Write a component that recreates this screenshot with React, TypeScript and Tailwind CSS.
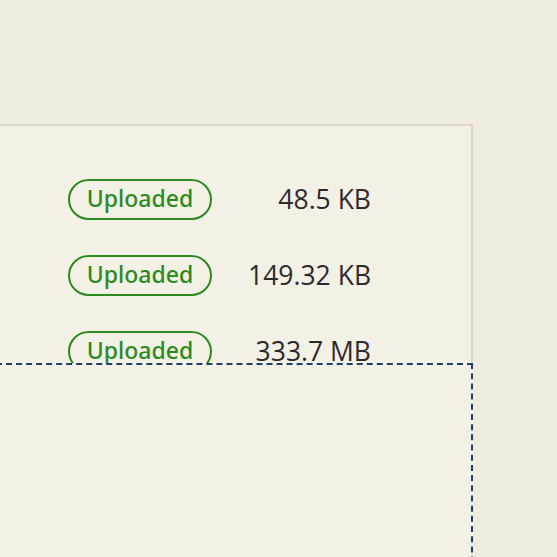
const files = [
  { status: "Uploaded", size: "48.5 KB" },
  { status: "Uploaded", size: "149.32 KB" },
  { status: "Uploaded", size: "333.7 MB" },
  { status: "Uploaded", size: "1.2 MB" },
];

export default function App() {
  return (
    <div className="relative h-[557px] w-[557px] overflow-hidden bg-[#efecdf] font-['Open_Sans',sans-serif]">
      <div className="pt-[124px]">
        {/* file list panel */}
        <div className="h-[460px] w-[473px] border-t-2 border-r-2 border-[#dcd7c8] bg-[#f3f0e5] pt-[35px]">
          {files.map((f, i) => (
            <div key={i} className="flex h-[76px] items-center">
              <div className="ml-[68px] flex h-[41px] w-[144px] items-center justify-center rounded-full border-2 border-[#2b8a20] pb-[1px] font-['Noto_Sans',sans-serif] text-[23px] font-medium leading-none text-[#2b8a20]">
                {f.status}
              </div>
              <div className="w-[159px] text-right text-[26.5px] leading-none text-[#2e2a2c]">
                {f.size}
              </div>
            </div>
          ))}
        </div>
      </div>

      {/* drop zone overlay */}
      <div className="absolute left-[-4px] top-[363px] h-[220px] w-[477px] border-2 border-dashed border-[#1d4068] bg-[#f3f0e5]" />
    </div>
  );
}
